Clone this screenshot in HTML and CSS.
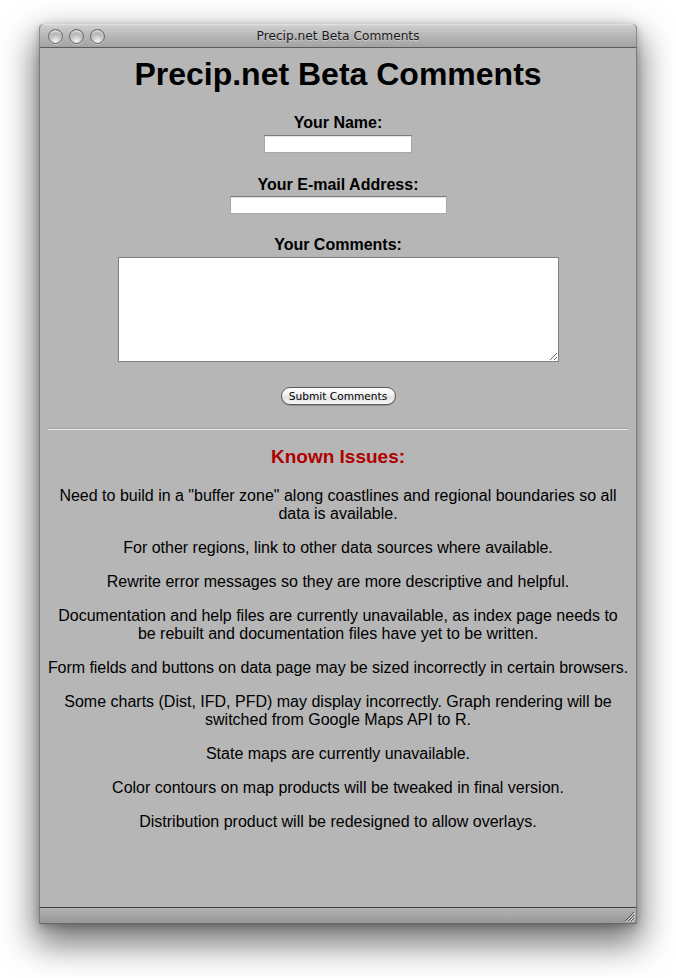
FILE: index.html
```html
<!DOCTYPE html>
<html>
<head>
<meta charset="utf-8">
<title>Precip.net Beta Comments</title>
<link rel="stylesheet" href="styles.css">
</head>
<body>
<div class="window">
  <div class="titlebar">
    <div class="lights">
      <span class="light"></span>
      <span class="light"></span>
      <span class="light"></span>
    </div>
    <div class="title">Precip.net Beta Comments</div>
    <div class="spacer"></div>
  </div>
  <div class="content">
    <h1 class="heading">Precip.net Beta Comments</h1>
    <form class="form">
      <label class="label first">Your Name:</label>
      <input class="field name-field" type="text">
      <label class="label email-label">Your E-mail Address:</label>
      <input class="field email-field" type="text">
      <label class="label comments-label">Your Comments:</label>
      <textarea class="comments"></textarea>
      <button class="submit" type="button">Submit Comments</button>
    </form>
    <hr class="rule">
    <h3 class="issues-title">Known Issues:</h3>
    <p class="issue first-issue">Need to build in a "buffer zone" along coastlines and regional boundaries so all data is available.</p>
    <p class="issue">For other regions, link to other data sources where available.</p>
    <p class="issue">Rewrite error messages so they are more descriptive and helpful.</p>
    <p class="issue">Documentation and help files are currently unavailable, as index page needs to be rebuilt and documentation files have yet to be written.</p>
    <p class="issue wide">Form fields and buttons on data page may be sized incorrectly in certain browsers.</p>
    <p class="issue">Some charts (Dist, IFD, PFD) may display incorrectly. Graph rendering will be switched from Google Maps API to R.</p>
    <p class="issue">State maps are currently unavailable.</p>
    <p class="issue">Color contours on map products will be tweaked in final version.</p>
    <p class="issue">Distribution product will be redesigned to allow overlays.</p>
  </div>
  <div class="bottombar">
    <svg class="grip" width="12" height="12" viewBox="0 0 12 12">
      <path d="M11 2 L2 11 M11 5 L5 11 M11 8 L8 11" stroke="#555" stroke-width="1" fill="none"/>
      <path d="M12 3 L3 12 M12 6 L6 12 M12 9 L9 12" stroke="#ddd" stroke-width="1" fill="none"/>
    </svg>
  </div>
</div>
</body>
</html>
```

FILE: styles.css
```css
html, body {
  margin: 0;
  padding: 0;
  background: #ffffff;
}

body {
  font-family: "Liberation Sans", Arial, sans-serif;
  color: #000;
  padding-bottom: 54px;
}

.window {
  margin: 24px 0 0 39px;
  width: 598px;
  box-sizing: border-box;
  border-left: 1px solid #7c7c7c;
  border-right: 1px solid #7c7c7c;
  border-radius: 5px 5px 0 0;
  box-shadow: 0 16px 34px 4px rgba(0, 0, 0, 0.55), 0 2px 8px rgba(0, 0, 0, 0.25);
  background: #b6b6b6;
}

.titlebar {
  height: 23px;
  border-bottom: 1px solid #5c5c5c;
  border-radius: 5px 5px 0 0;
  background: linear-gradient(#e4e4e4 0, #cdcdcd 2px, #b8b8b8 50%, #a2a2a2 100%);
  display: grid;
  grid-template-columns: 1fr auto 1fr;
  align-items: center;
  margin: 0 -1px;
  border-left: 1px solid #8a8a8a;
  border-right: 1px solid #8a8a8a;
}

.lights {
  display: flex;
  gap: 6px;
  padding-left: 8px;
  align-items: center;
  padding-top: 1px;
}

.light {
  width: 13px;
  height: 13px;
  border-radius: 50%;
  border: 1px solid #666;
  background: radial-gradient(circle at 50% 85%, #f4f4f4 0, #c2c2c2 45%, #858585 100%);
  box-shadow: inset 0 3px 2px -1px rgba(255,255,255,0.7), 0 1px 0 rgba(255,255,255,0.4);
}

.title {
  font-family: "DejaVu Sans", sans-serif;
  font-size: 12.2px;
  color: #1a1a1a;
  text-shadow: 0 1px 0 rgba(255,255,255,0.35);
  padding-top: 1px;
}

.content {
  height: 859px;
  box-sizing: border-box;
  padding: 8px 8px 0 8px;
  text-align: center;
  background: #b6b6b6;
}

.heading {
  margin: 0;
  font-size: 32px;
  line-height: 37px;
  font-weight: bold;
}

.form {
  display: flex;
  flex-direction: column;
  align-items: center;
}

.label {
  display: block;
  font-weight: bold;
  font-size: 16px;
  line-height: 18px;
  margin-top: 22px;
}

.label.first {
  margin-top: 21px;
}

.email-label {
  margin-top: 23px;
}

.field {
  display: block;
  height: 18px;
  box-sizing: border-box;
  margin: 3px 0 0 0;
  padding: 0;
  border: 1px solid #a8a8a8;
  border-top-color: #7a7a7a;
  background: #fff;
  box-shadow: inset 0 1px 1px rgba(0,0,0,0.12);
}

.name-field {
  width: 148px;
}

.email-field {
  width: 217px;
  margin-top: 2px;
}

.comments {
  display: block;
  width: 441px;
  height: 105px;
  box-sizing: border-box;
  margin: 3px 0 0 0;
  border: 1px solid #808080;
  background: #fff;
  padding: 0;
}

.submit {
  margin-top: 25px;
  width: 115px;
  height: 18px;
  box-sizing: border-box;
  padding: 0;
  border: 1px solid #5a5a5a;
  border-radius: 9px;
  background: linear-gradient(#ffffff 0, #f1f1f1 45%, #e2e2e2 55%, #f7f7f7 100%);
  font-family: "DejaVu Sans", sans-serif;
  font-size: 10.6px;
  line-height: 15px;
  color: #000;
  box-shadow: 0 1px 1px rgba(0,0,0,0.2);
}

.rule {
  margin: 23px 0 0 0;
  height: 0;
  border: 0;
  border-top: 1px solid #a2a2a2;
  border-bottom: 1px solid #ececec;
}

.issues-title {
  margin: 16px 0 0 0;
  font-size: 19px;
  line-height: 22px;
  color: #b00000;
  font-weight: bold;
}

.issue {
  margin: 16px 0 0 0;
  font-size: 16px;
  line-height: 18px;
}

.issue.wide {
  margin-left: -4px;
  margin-right: -4px;
  letter-spacing: -0.05px;
}

.first-issue {
  margin-top: 19px;
}

.bottombar {
  height: 15px;
  border-top: 1px solid #3e3e3e;
  border-bottom: 1px solid #6a6a6a;
  background: linear-gradient(#c4c4c4 0, #b0b0b0 1px, #a3a3a3 60%, #989898 100%);
  display: flex;
  justify-content: flex-end;
  align-items: flex-end;
  margin: 0 -1px;
  border-left: 1px solid #7c7c7c;
  border-right: 1px solid #7c7c7c;
}

.grip {
  display: block;
  margin: 0 1px 1px 0;
}
```
